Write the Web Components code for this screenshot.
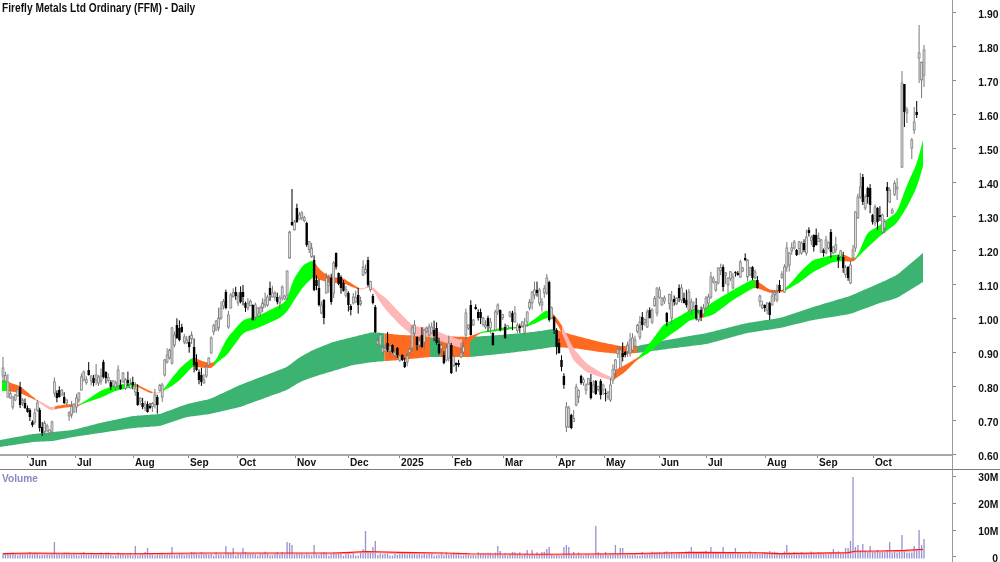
<!DOCTYPE html>
<html><head><meta charset="utf-8"><title>FFM</title>
<style>html,body{margin:0;padding:0;background:#fff;overflow:hidden}</style></head>
<body>
<chart-app>
  <price-panel slot="price">Firefly Metals Ltd Ordinary (FFM) - Daily</price-panel>
  <price-axis slot="paxis"></price-axis>
  <time-axis slot="time"></time-axis>
  <volume-panel slot="vol">Volume</volume-panel>
  <volume-axis slot="vaxis"></volume-axis>
</chart-app>
<script>
const FONT='"Liberation Sans",Arial,sans-serif';
const STEP=921/376, BARS=377;
const barX=i=>3+i*STEP;
function rng(s){return()=>{s|=0;s=s+0x6D2B79F5|0;let t=Math.imul(s^s>>>15,1|s);t=t+Math.imul(t^t>>>7,61|t)^t;return((t^t>>>14)>>>0)/4294967296}}
function lerp(P,x,k=1){if(x<=P[0][0])return P[0][k];for(let i=1;i<P.length;i++){if(x<=P[i][0]){const a=P[i-1],b=P[i],u=(x-a[0])/(b[0]-a[0]||1);return a[k]+(b[k]-a[k])*u}}return P[P.length-1][k]}

const PATH=[[3,372],[8,392],[13,398],[17,410],[25,402],[33,410],[40,430],[47,430],[52,428],[55,392],[60,393],[65,398],[70,415],[75,412],[80,385],[85,378],[90,378],[100,382],[105,377],[115,383],[122,385],[130,385],[138,400],[145,407],[150,405],[158,398],[163,360],[170,335],[175,330],[180,333],[185,340],[190,347],[195,358],[200,378],[205,378],[210,365],[213,330],[218,318],[225,298],[232,295],[240,298],[250,305],[260,303],[270,295],[280,290],[285,295],[290,250],[295,215],[300,212],[305,225],[310,250],[315,282],[322,310],[328,285],[335,275],[340,282],[347,293],[355,300],[362,305],[365,270],[369,275],[372,298],[375,330],[378,350],[385,350],[395,352],[405,362],[410,350],[415,338],[420,332],[430,325],[435,328],[442,345],[448,352],[455,365],[460,355],[465,345],[470,310],[478,312],[485,325],[495,308],[500,310],[510,330],[515,332],[522,325],[530,300],[540,290],[548,282],[552,318],[557,345],[563,378],[567,415],[570,420],[575,418],[580,385],[590,378],[600,388],[610,392],[615,358],[620,345],[628,340],[640,322],[650,310],[658,292],[665,300],[675,295],[685,296],[692,312],[700,310],[710,280],[720,270],[730,275],[740,265],[750,280],[755,300],[765,310],[770,305],[778,285],[785,260],[790,245],[800,245],[810,238],[820,240],[830,245],[840,250],[848,280],[852,240],[857,190],[862,185],[870,205],[880,215],[887,190],[895,185]];
const BODY=[[3,368,376,1],[4,367,372,0],[7,368,378,0],[9,382,397,1],[12,397,407,1],[15,395,400,1],[17,390,396,1],[21,387,405,0],[24,403,408,0],[27,408,412,0],[29,410,417,0],[32,422,425,0],[34,413,422,1],[37,403,410,1],[39,410,428,0],[42,427,433,0],[45,423,432,1],[47,426,431,1],[50,430,433,1],[53,422,432,1],[55,382,393,1],[57,393,398,0],[60,390,397,0],[62,390,395,1],[65,397,403,0],[68,413,416,1],[71,406,415,1],[73,404,412,1],[77,398,407,1],[80,393,400,1],[82,377,390,1],[85,372,380,1],[88,370,375,0],[90,376,381,1],[93,378,383,0],[95,375,380,1],[98,377,383,1],[101,376,381,1],[104,362,377,0],[107,372,378,0],[110,377,383,1],[112,382,387,0],[115,383,387,1],[117,370,386,1],[120,385,389,0],[122,381,386,1],[124,373,382,1],[127,373,383,1],[129,380,383,0],[133,382,385,0],[136,388,392,1],[138,392,405,0],[142,403,407,0],[145,404,408,1],[147,404,412,0],[150,406,408,0],[154,395,405,1],[158,397,405,0],[162,385,397,1],[164,360,375,1],[167,355,362,1],[169,350,358,1],[171,328,363,1],[174,335,345,1],[177,325,338,0],[180,328,340,0],[182,327,332,0],[185,337,342,1],[189,342,347,0],[191,335,339,1],[194,347,365,0],[197,362,370,0],[199,372,380,0],[202,375,382,0],[206,367,376,1],[209,358,365,1],[212,338,353,1],[215,321,330,1],[218,318,328,1],[220,312,327,1],[222,308,318,1],[225,300,308,1],[227,292,308,0],[229,315,327,1],[232,295,308,1],[235,292,296,0],[238,296,303,1],[240,292,302,0],[242,292,297,0],[245,303,308,0],[248,303,308,1],[252,305,320,0],[255,305,317,1],[257,308,314,1],[259,308,313,1],[262,303,308,1],[265,300,305,1],[267,297,305,1],[270,288,295,0],[273,293,297,1],[276,293,297,1],[278,297,302,0],[281,298,303,1],[283,287,298,1],[286,283,298,0],
[288,271,295,1],[290,232,258,1],[293,222,225,0],[296,209,223,1],[298,208,222,0],[300,215,219,1],[302,213,218,1],[307,223,245,0],[311,248,257,1],[313,260,290,0],[316,280,286,0],[319,288,305,0],[321,305,313,1],[323,300,318,0],[327,278,293,1],[331,278,302,0],[333,263,293,1],[336,253,267,0],[339,273,284,0],[342,277,288,0],[344,283,291,0],[349,293,305,0],[352,306,310,0],[354,297,303,1],[357,293,303,1],[359,295,305,0],[362,305,315,0],[364,267,275,1],[367,260,267,1],[369,260,285,0],[372,296,303,0],[375,307,332,0],
[377,341,344,1],[379,335,345,1],[382,348,352,1],[387,343,350,0],[390,346,351,1],[393,345,352,0],[397,348,355,0],[402,355,360,0],[405,362,367,0],[407,356,362,1],[411,328,348,1],[414,325,333,1],[417,337,345,0],[420,341,345,1],[422,335,347,0],[425,330,342,1],[428,327,335,1],[431,327,333,1],[434,330,336,0],[437,328,343,0],[440,344,353,0],[443,355,363,0],[446,348,360,1],[450,343,358,1],[452,345,373,0],[455,363,365,0],[458,363,365,0],[460,353,357,1],[463,347,352,1],[465,337,348,1],[467,313,335,1],[470,305,335,0],[473,320,325,1],[476,307,309,0],[479,312,318,0],[481,312,318,0],[485,325,327,1],[487,318,326,0],[491,322,328,1],[494,333,345,0],[495,312,330,1],[498,305,312,1],[501,310,330,0],[504,320,326,1],[506,327,338,0],[511,312,316,1],[513,313,322,0],[516,313,322,1],[519,330,335,1],[521,326,328,0],[525,325,332,1],[528,312,322,1],[531,292,303,1],[534,290,295,1],[537,290,293,0],[540,290,303,1],[543,302,305,1],[546,278,293,1],[549,282,320,0],[552,308,318,1],[555,317,330,0],[557,330,347,0],[560,343,353,0],[561,360,367,0],[564,376,385,0],[567,407,427,1],[570,408,427,1],[572,415,428,0],[575,387,405,1],[577,387,405,1],[580,376,383,0],[582,376,383,0],[585,378,383,1],[587,385,390,1],[590,382,398,0],[593,385,392,1],[596,381,394,0],[600,381,395,0],[602,385,390,1],[605,393,394,0],[608,392,397,1],[611,385,400,1],[616,360,370,1],[620,350,368,1],[622,353,357,0],[625,352,355,0],[628,345,352,1],[630,340,353,1],[632,338,350,1],[635,340,346,1],[640,322,337,1],[643,317,325,0],[646,312,327,1],[649,310,318,0],[653,310,322,1],[656,288,313,1],[661,292,297,0],[663,298,305,1],[666,295,317,0],[668,313,322,0],[671,300,318,1],[674,299,302,0],[676,298,304,1],[678,288,298,0],[681,288,300,1],[683,298,303,0],[686,300,305,0],[689,292,310,1],[692,302,310,1],[695,305,318,0],[699,313,320,1],[702,310,317,0],[704,308,314,1],[707,298,308,1],[709,297,303,1],[712,277,297,1],[715,280,283,1],[717,282,290,1],[719,268,283,1],[722,267,290,0],[724,267,287,0],[727,267,290,0],[729,278,285,1],[732,277,288,1],[736,272,273,0],[738,273,275,0],[741,262,277,1],[744,258,260,0],[747,260,277,1],[751,268,275,1],[753,267,278,0],[756,272,278,1],[758,280,288,0],[762,305,308,1],[764,305,308,0],[767,303,310,1],[769,303,315,0],[773,296,305,1],[776,293,300,1],[780,285,291,0],[784,267,292,1],[787,248,267,1],[789,253,265,1],[793,242,248,1],[797,250,255,0],[801,243,253,1],[804,243,250,0],[807,237,253,1],[810,230,233,0],[813,235,247,0],[817,235,245,0],[820,240,248,1],[822,240,252,1],[824,250,253,0],[827,240,253,1],[830,232,252,0],[833,247,253,1],[835,245,250,1],[838,257,260,0],[842,255,263,1],[844,257,268,0],[848,267,278,0],[851,265,283,1],[853,250,258,1],[856,212,248,1],[858,197,218,1],[860,187,197,1],[863,177,202,0],[866,197,208,1],[868,188,197,0],[871,188,205,0],[873,215,222,0],[876,207,223,1],[878,208,222,0],[881,215,217,0],[883,215,232,1],[885,222,228,1],[888,187,191,0],[891,200,207,0],[893,210,213,1],[896,177,197,1],[898,187,189,1]];
const OVER=[[293,189,226,222,225,0],[888,182,217,187,191,0],[896,167,199,177,197,1],[898,178,200,187,189,1],[860,173,199,187,197,1],[863,174,205,177,202,0],[901,71,168,83,167,1],[904,84,127,84,112,0],[906,122,133,125,132,1],[908,107,123,110,113,1],[911,138,159,140,148,1],[914,107,134,122,130,1],[916,101,118,112,115,0],[918,25,83,53,58,1],[921,62,98,62,80,1],[923.9,45,87,50,75,1],[3,357,382,368,376,1],[546,274,295,278,293,1],[375,305,333,307,332,0],[452,343,374,345,373,0],[567,402,432,407,427,1]];

const LONG=[[0,440,447],[33,434,442],[53,432,441],[73,430,437],[100,423,433],[133,416,428],[160,414,426],[187,404,417],[210,399,414],[240,385,407],[287,367,390],[300,357,382],[313,350,377],[333,342,371],[353,337,365],[373,332,362],[400,335,360],[430,336,357],[470,337,357],[500,335,354],[533,332,350],[553,329,347],[573,335,348],[600,342,352],[620,346,354],[637,346,353],[667,340,349],[707,333,344],[747,323,333],[780,318,328],[813,307,320],[850,296,314],[880,283,303],[897,275,298],[923,253,282]];
const SHORT=[[2,380,391],[8,382,391],[20,386,393],[33,397,399],[37,399.5,401],[45,404,407],[52,408,411],[55,406,409],[70,404,407],[78,405,406.5],[82,403,404],[100,391,398],[115,385,391],[133,383,387],[136,384,386],[150,391,393],[157,393,394],[163,390,391],[172,378,386],[180,368,380],[193,357,366],[197,359,367],[205,362,368],[213,363,368],[215,362,364],[227,338,355],[243,320,333],[260,315,327],[280,305,318],[287,300,312],[293,280,302],[303,265,287],[313,260,277],[320,270,280],[330,277,283],[343,278,283],[357,287,289],[362,289,290],[368,286,287],[373,287,290],[380,294,302],[386,298,310],[400,313,325],[413,326,336],[430,328,337],[446,335,343],[461,340,348],[465,338,348],[476,334,336],[481,332,333],[506,327,330],[518,327,328],[526,325,327],[536,318,323],[546,310,318],[551,312,318],[556,317,322],[563,327,335],[573,348,360],[586,363,372],[600,372,377],[613,378,381],[615,370,379],[625,365,372],[637,358,360],[640,356,358],[650,343,352],[663,325,340],[680,316,328],[690,310,320],[702,310,318],[713,302,315],[733,290,300],[753,279,288],[757,281,288],[770,290,293],[783,290,292],[790,284,288],[800,272,282],[813,260,272],[833,255,262],[843,254,261],[853,259,262],[857,257,258],[867,233,248],[880,225,236],[897,212,223],[907,185,207],[917,163,187],[923,140,166]];
const C={g:'#3cb371',l:'#00ff00',o:'#ff6a21',p:'#ffb6b6'};
const LONGSEG=[[0,384.5,'g'],[384.5,430,'o'],[430,440,'g'],[440,470,'o'],[470,556,'g'],[556,637,'o'],[637,923,'g']];
const SHORTSEG=[[2,8,'l'],[8,35,'o'],[35,55,'p'],[55,81,'o'],[81,135,'l'],[135,152,'o'],[152,163,'p'],[163,195,'l'],[195,214,'o'],[214,313,'l'],[313,358,'o'],[358,462,'p'],[462,480,'o'],[480,515,'l'],[515,526,'o'],[526,551,'l'],[551,562,'o'],[562,614,'p'],[614,639,'o'],[639,700,'l'],[700,704,'o'],[704,755,'l'],[755,785,'o'],[785,843,'l'],[843,856,'o'],[856,923,'l']];
function smooth(P,x,k){const lo=P[0][0],hi=P[P.length-1][0],w=Math.min(2.5,x-lo,hi-x);if(w<=0)return lerp(P,x,k);let s=0,n=0;for(let d=-w;d<=w+.001;d+=w/2.5){s+=lerp(P,x+d,k);n++}return s/n}
function ribbon(P,segs){let out='';for(const [a,b,c] of segs){const xs=[];for(let x=a;x<b;x+=1.5)xs.push(x);xs.push(b);
  const top=xs.map(x=>x.toFixed(1)+','+smooth(P,x,1).toFixed(1)),bot=xs.slice().reverse().map(x=>x.toFixed(1)+','+smooth(P,x,2).toFixed(1));
  out+=`<polygon fill="${C[c]}" points="${top.concat(bot).join(' ')}"/>`}return out}
function candles(){const r=rng(77);const ov={},bd={};for(const o of BODY)bd[Math.round((o[0]-3)/STEP)]=o;for(const o of OVER)ov[Math.round((o[0]-3)/STEP)]=o;
  let s='',prev=372;for(let i=0;i<BARS;i++){const x=+barX(i).toFixed(1);let h,l,t,b,up;const o=ov[i],q=bd[i];
    if(o){[h,l,t,b,up]=o.slice(1)}
    else if(q){t=q[1];b=q[2];up=q[3];h=t-r()*r()*11-.5;l=b+r()*r()*9+.5;prev=(t+b)/2}
    else if(x>=896){continue}
    else{const ctr=lerp(PATH,x);const c=ctr+(r()-.5)*8;const open=prev*.35+ctr*.65+(r()-.5)*6;up=1;
      t=Math.min(c,open);b=Math.max(c,open);if(b-t<3)b=t+3;
      h=t-r()*r()*9-.5;l=b+r()*r()*8+.5;prev=c}
    const col=up?'#777':'#000';
    s+=`<path d="M${x} ${h.toFixed(1)}V${l.toFixed(1)}" stroke="${col}" stroke-width="1" fill="none"/>`;
    s+=up?`<rect x="${x-.95}" y="${t.toFixed(1)}" width="1.9" height="${(b-t).toFixed(1)}" fill="#e2e2e2" stroke="#808080" stroke-width=".8"/>`:`<rect x="${x-1.2}" y="${t.toFixed(1)}" width="2.4" height="${(b-t).toFixed(1)}" fill="#000"/>`}
  return s}

const VOV=[[55,542],[135,546],[147,548],[172,547],[225,546],[233,548],[243,548],[287,542],[290,543],[293,545],[313,545],[364,549],[366,531],[374,547],[376,541],[498,546],[501,551],[528,550],[531,550],[546,549],[549,547],[563,547],[566,545],[570,547],[595,526],[615,545],[620,548],[623,548],[691,547],[711,547],[724,547],[736,548],[787,545],[833,549],[846,548],[848,548],[850,541],[853,477],[855,547],[858,545],[863,544],[871,546],[889,542],[901,535],[914,546],[919,530],[921,545],[923.9,539]];
const VMA=[[3,553.6],[30,553],[60,553.2],[133,553.8],[200,553],[333,553],[350,552.4],[366,551.5],[400,552.4],[445,553],[470,553.8],[540,554.2],[620,553.8],[700,552.4],[760,552.8],[780,553.6],[848,552.6],[855,551.2],[880,551],[905,550.4],[923,549.2]];
function volumes(){const r=rng(11);const ov={};for(const o of VOV)ov[Math.round((o[0]-3)/STEP)]=o[1];let s='';
  for(let i=0;i<BARS;i++){const x=+barX(i).toFixed(1);const bh=x>845?5.5+r()*3:x>640?3.5+r()*3.5:2.2+r()*4;const top=ov[i]||558-bh;
    s+=`<path d="M${x} ${top.toFixed(1)}V558.5"/>`}return s}
const vmaPts=VMA.map(p=>p[0]+','+p[1]).join(' ');

class ChartApp extends HTMLElement{constructor(){super();this.attachShadow({mode:'open'}).innerHTML=`<style>
:host{display:grid;grid-template-columns:952px 48px;grid-template-rows:456px 14px 92px;width:1000px;height:562px;overflow:hidden;background:#fff;font:bold 10.5px ${FONT};color:#111}
::slotted([slot=paxis]){grid-column:2;grid-row:1/3}::slotted([slot=price]){grid-column:1;grid-row:1}::slotted([slot=time]){grid-column:1;grid-row:2}::slotted([slot=vol]){grid-column:1;grid-row:3}::slotted([slot=vaxis]){grid-column:2;grid-row:3}
</style><slot name="price"></slot><slot name="paxis"></slot><slot name="time"></slot><slot name="vol"></slot><slot name="vaxis"></slot>`}}

class PricePanel extends HTMLElement{constructor(){super();this.attachShadow({mode:'open'}).innerHTML=`<style>
:host{display:block;position:relative;border-bottom:2px solid #a8a8a8;box-sizing:border-box;height:456px;overflow:hidden}
svg{display:block;width:952px;height:456px;filter:blur(.3px)}
.t{position:absolute;left:2px;top:1px;font:bold 12px/14px ${FONT};color:#111;white-space:nowrap;transform:scaleX(.85);transform-origin:0 0;filter:blur(.2px)}
</style><div class="t"><slot></slot></div>
<svg viewBox="0 0 952 456">${ribbon(LONG,LONGSEG)}${ribbon(SHORT,SHORTSEG)}${candles()}</svg>`}}

class TimeAxis extends HTMLElement{constructor(){super();
const m=[['',27],['Jun',48],['Jul',58],['Aug',55],['Sep',49],['Oct',58],['Nov',53],['Dec',51],['2025',53],['Feb',51],['Mar',53],['Apr',48],['May',55],['Jun',47],['Jul',59],['Aug',52],['Sep',56],['Oct',79]];
this.attachShadow({mode:'open'}).innerHTML=`<style>
:host{display:flex;height:14px;box-sizing:border-box;border-bottom:1.5px solid #7c7c7c;overflow:hidden}
.c{flex:none;position:relative;box-sizing:border-box;padding-left:1.5px;white-space:nowrap}
span{display:inline-block;font:bold 11px/13px ${FONT};color:#111;transform:scaleX(.92);transform-origin:0 0;filter:blur(.2px)}
.c.k::before{content:"";position:absolute;left:0;top:0;width:1px;height:2px;background:#888}
</style>`+m.map((e,i)=>`<div class="c ${i?'k':''}" style="width:${e[1]}px"><span>${e[0]}</span></div>`).join('')}}

class PriceAxis extends HTMLElement{constructor(){super();
const v=['1.90','1.80','1.70','1.60','1.50','1.40','1.30','1.20','1.10','1.00','0.90','0.80','0.70','0.60'];
this.attachShadow({mode:'open'}).innerHTML=`<style>
:host{display:block;box-sizing:border-box;height:470px;border-left:1.5px solid #9a9a9a;border-bottom:1.5px solid #7c7c7c;overflow:hidden}
.w{margin-top:-4px}
.r{height:34px;display:flex;align-items:center;justify-content:space-between;padding-right:2px}
i{width:3px;height:1px;background:#888;margin-top:-.5px}b{font:bold 11px/12px ${FONT};color:#111;padding-top:1px;transform:scaleX(.94);transform-origin:100% 0;filter:blur(.2px)}
</style><div class="w">`+v.map(t=>`<div class="r"><i></i><b>${t}</b></div>`).join('')+`</div>`}}

class VolumePanel extends HTMLElement{constructor(){super();this.attachShadow({mode:'open'}).innerHTML=`<style>
:host{display:block;position:relative;height:92px;overflow:hidden}
svg{display:block;width:952px;height:92px;filter:blur(.2px)}
.t{position:absolute;left:2px;top:2px;font:bold 11px/13px ${FONT};color:#8888c4;transform:scaleX(.92);transform-origin:0 0;filter:blur(.2px)}
</style><div class="t"><slot></slot></div>
<svg viewBox="0 470 952 92"><g stroke="#9292d2" stroke-width="1.3" fill="none">${volumes()}</g>
<polyline points="${vmaPts}" transform="translate(0 1)" fill="none" stroke="#ff9a9a" stroke-width="1"/>
<polyline points="${vmaPts}" fill="none" stroke="#ff1414" stroke-width="1.1"/></svg>`}}

class VolumeAxis extends HTMLElement{constructor(){super();
this.attachShadow({mode:'open'}).innerHTML=`<style>
:host{display:block;height:92px;box-sizing:border-box;border-left:1.5px solid #9a9a9a}
.w{margin-top:-6.5px}
.r{height:27px;display:flex;align-items:center;justify-content:space-between;padding-right:2px}
i{width:3px;height:1px;background:#888;margin-top:-2px}b{font:bold 11px/8px ${FONT};color:#111;transform:scaleX(.94);transform-origin:100% 0}
.r:last-child{height:26px}
</style><div class="w">`+['30M','20M','10M','0'].map(t=>`<div class="r"><i></i><b>${t}</b></div>`).join('')+`</div>`}}

customElements.define('chart-app',ChartApp);
customElements.define('price-panel',PricePanel);
customElements.define('price-axis',PriceAxis);
customElements.define('time-axis',TimeAxis);
customElements.define('volume-panel',VolumePanel);
customElements.define('volume-axis',VolumeAxis);
</script>
</body></html>
